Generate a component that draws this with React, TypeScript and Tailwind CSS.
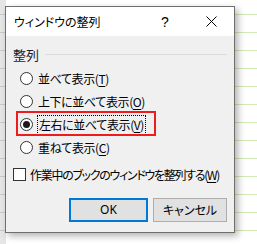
import React from "react";

const font = "[font-family:'Noto_Sans_CJK_JP','Noto_Sans',sans-serif] [font-feature-settings:'palt']";

function Radio({ checked }: { checked?: boolean }) {
  return (
    <span className="w-[13px] h-[13px] rounded-full border border-[#333333] bg-white flex items-center justify-center shrink-0">
      {checked && <span className="w-[7px] h-[7px] rounded-full bg-[#1a1a1a]" />}
    </span>
  );
}

function Mn({ c }: { c: string }) {
  return <span className="underline underline-offset-[2px]">{c}</span>;
}

export default function App() {
  const rows = Array.from({ length: 14 });
  return (
    <div className="relative w-[257px] h-[244px] overflow-hidden bg-white">
      {/* spreadsheet background */}
      <div className="absolute inset-0 flex">
        <div className="w-[6px] bg-[#e6e6e6] flex flex-col">
          <div className="h-[15px] shrink-0 border-b border-[#c8c8c8]" />
          {rows.map((_, i) => (
            <div key={i} className="h-[18px] shrink-0 border-b border-[#c8c8c8]" />
          ))}
        </div>
        <div className="flex-1" />
        <div className="w-[22px] flex flex-col">
          <div className="h-[15px] shrink-0 border-b border-[#d2e9b8]" />
          {rows.map((_, i) => (
            <div key={i} className="h-[18px] shrink-0 border-b border-[#d2e9b8]" />
          ))}
        </div>
      </div>

      {/* dialog window */}
      <div className={`absolute left-[5px] top-[6px] w-[230px] h-[227px] border border-[#6f6f6f] bg-[#f0f0f0] flex flex-col shadow-[3px_3px_7px_rgba(0,0,0,0.3)] ${font} text-[12px] text-black`}>
        <div className="h-[29px] bg-white flex items-center shrink-0">
          <span className="pl-[8px] flex-1 leading-none">ウィンドウの整列</span>
          <span className="w-[46px] text-center text-[14px] leading-none [font-family:'Liberation_Sans',sans-serif]">?</span>
          <span className="w-[46px] flex items-center justify-center">
            <svg width="11" height="11" viewBox="0 0 11 11">
              <path d="M0.5 0.5 L10.5 10.5 M10.5 0.5 L0.5 10.5" stroke="#000" strokeWidth="1" />
            </svg>
          </span>
        </div>

        <div className="flex flex-col px-[7px]">
          <div className="mt-[10px] h-[16px] flex items-center gap-[6px]">
            <span className="text-[13px] leading-none text-[#1b1b33]">整列</span>
            <span className="flex-1 h-px bg-[#dcdcdc]" />
          </div>

          <div className="mt-[5px] flex flex-col pl-[7px] tracking-[-0.4px]">
            <div className="h-[23px] flex items-center gap-[5px]">
              <Radio />
              <span className="leading-none">並べて表示(<Mn c="T" />)</span>
            </div>
            <div className="h-[23px] flex items-center gap-[5px]">
              <Radio />
              <span className="leading-none">上下に並べて表示(<Mn c="O" />)</span>
            </div>
            <div className="relative h-[23px] flex items-center gap-[4px]">
              <span className="absolute left-[-4px] top-[-2px] w-[140px] h-[25px] border-2 border-[#ee1c1c]" />
              <Radio checked />
              <span className="leading-none px-[1px] py-[3px] border border-dotted border-black">左右に並べて表示(<Mn c="V" />)</span>
            </div>
            <div className="h-[23px] flex items-center gap-[5px]">
              <Radio />
              <span className="leading-none">重ねて表示(<Mn c="C" />)</span>
            </div>
          </div>

          <div className="mt-[6px] h-[19px] flex items-center gap-[4px]">
            <span className="w-[13px] h-[13px] border border-[#333333] bg-white shrink-0" />
            <span className="leading-none whitespace-nowrap tracking-[-1.3px]">作業中のブックのウィンドウを整列する(<Mn c="W" />)</span>
          </div>

          <div className="mt-[14px] flex justify-end gap-[5px] pr-[0px]">
            <button className="w-[79px] h-[24px] border-2 border-[#0078d7] bg-[#e1e1e1] leading-none [font-family:'Noto_Sans','Noto_Sans_CJK_JP',sans-serif]">OK</button>
            <button className="w-[74px] h-[24px] border border-[#adadad] bg-[#e1e1e1] leading-none">キャンセル</button>
          </div>
        </div>
      </div>
    </div>
  );
}
